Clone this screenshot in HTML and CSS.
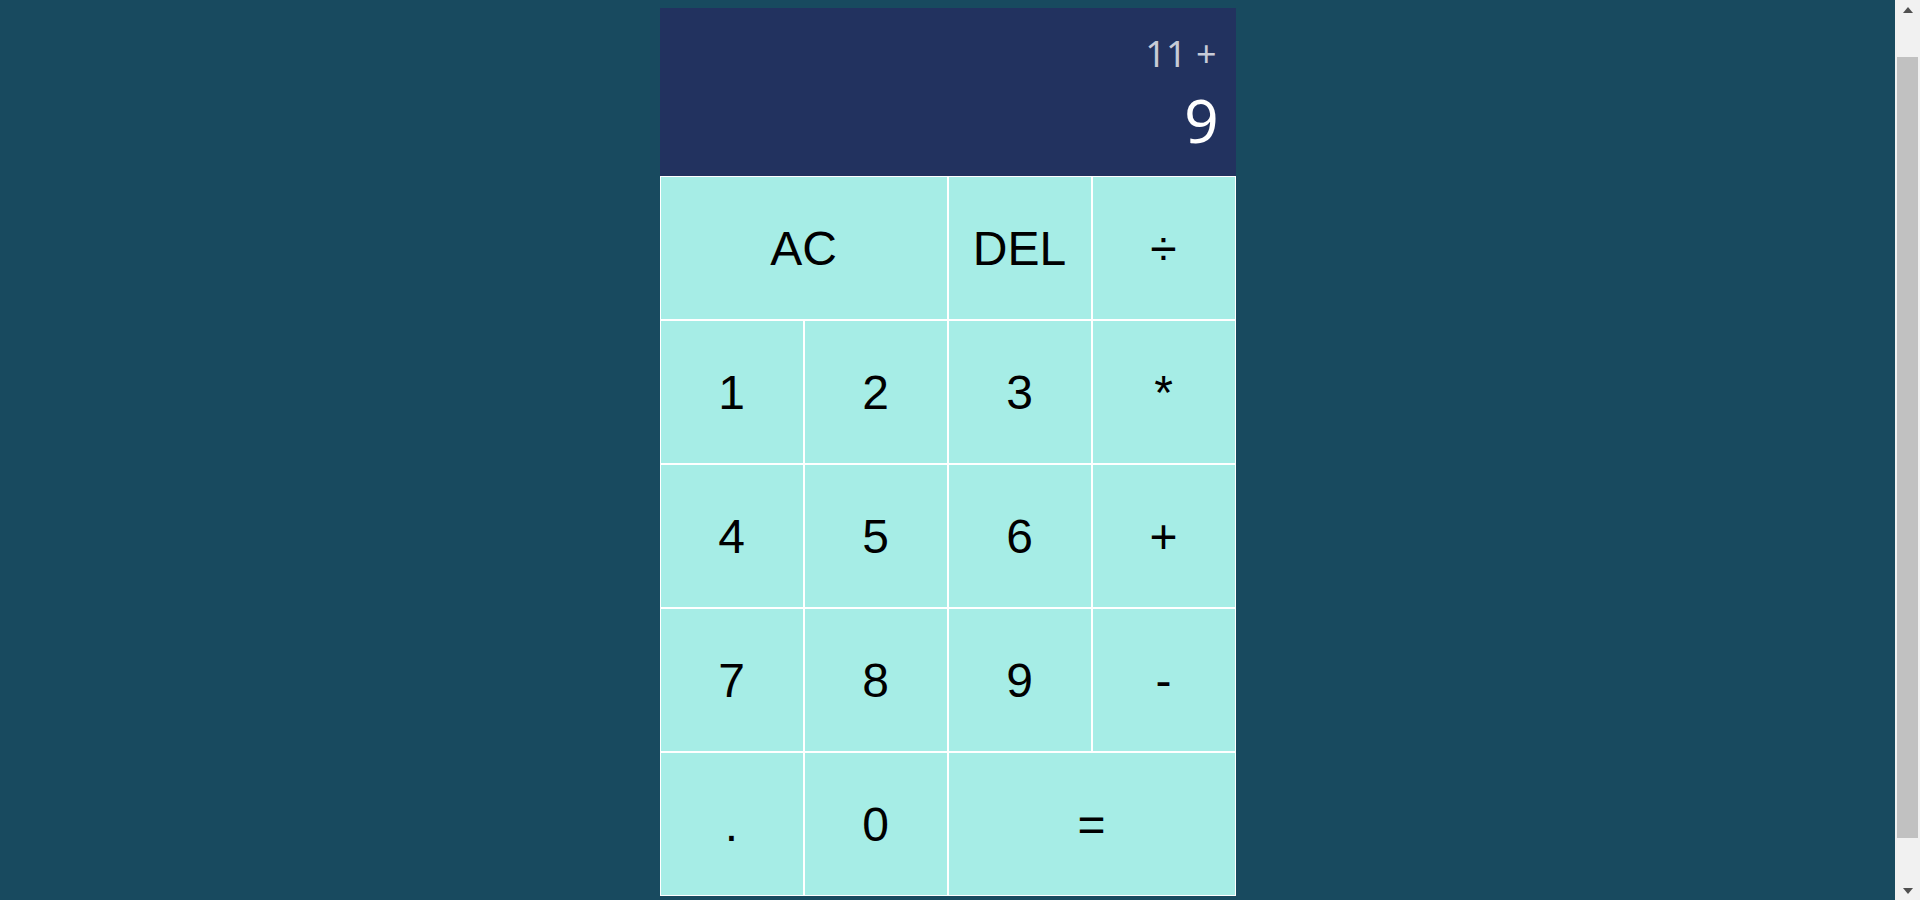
FILE: index.html
```html
<!DOCTYPE html>
<html lang="en">
<head>
<meta charset="utf-8">
<title>Calculator</title>
<link rel="stylesheet" href="styles.css">
</head>
<body>
<main class="page">
  <div class="calculator-grid">
    <div class="output">
      <div class="previous-operand">11 +</div>
      <div class="current-operand">9</div>
    </div>
    <button class="key span-two">AC</button>
    <button class="key">DEL</button>
    <button class="key">÷</button>
    <button class="key">1</button>
    <button class="key">2</button>
    <button class="key">3</button>
    <button class="key">*</button>
    <button class="key">4</button>
    <button class="key">5</button>
    <button class="key">6</button>
    <button class="key">+</button>
    <button class="key">7</button>
    <button class="key">8</button>
    <button class="key">9</button>
    <button class="key">-</button>
    <button class="key">.</button>
    <button class="key">0</button>
    <button class="key span-two">=</button>
  </div>
</main>
<div class="scrollbar" aria-hidden="true">
  <div class="sb-btn"><span class="arrow-up"></span></div>
  <div class="sb-track"><div class="sb-thumb"></div></div>
  <div class="sb-btn"><span class="arrow-down"></span></div>
</div>
</body>
</html>
```
FILE: styles.css
```css
* {
  box-sizing: border-box;
}

html, body {
  height: 100%;
  overflow: hidden;
}

body {
  margin: 0;
  display: flex;
  background-color: #184a5f;
  font-family: "Noto Sans", "Open Sans", sans-serif;
}

.page {
  flex: 1;
  min-width: 0;
  padding: 8px;
  overflow: hidden;
}

.calculator-grid {
  display: grid;
  justify-content: center;
  grid-template-columns: repeat(4, 144px);
  grid-template-rows: 168px repeat(5, 144px);
}

.key {
  cursor: pointer;
  font-family: "Liberation Sans", Arial, sans-serif;
  font-size: 48px;
  color: #000;
  padding: 0;
  margin: 0;
  border: 1px solid #fff;
  outline: none;
  background-color: #a6ede6;
}

.span-two {
  grid-column: span 2;
}

.output {
  grid-column: 1 / -1;
  background-color: #22325f;
  display: flex;
  flex-direction: column;
  align-items: flex-end;
  justify-content: flex-start;
  gap: 18px;
  padding: 28px 17px 0 10px;
}

.previous-operand {
  color: rgba(255, 255, 255, 0.75);
  font-size: 36px;
  line-height: 36px;
  margin-right: 2px;
}

.current-operand {
  color: #fff;
  font-size: 60px;
  line-height: 60px;
}

.scrollbar {
  width: 25px;
  flex: none;
  display: flex;
  flex-direction: column;
  background-color: #f1f1f1;
}

.sb-btn {
  height: 17px;
  display: flex;
  align-items: center;
  justify-content: center;
  padding-left: 1px;
}

.arrow-up {
  width: 0;
  height: 0;
  border-left: 5.5px solid transparent;
  border-right: 5.5px solid transparent;
  border-bottom: 6px solid #505050;
  margin-top: 2px;
}

.arrow-down {
  width: 0;
  height: 0;
  border-left: 5.5px solid transparent;
  border-right: 5.5px solid transparent;
  border-top: 6px solid #505050;
  margin-bottom: 2px;
}

.sb-track {
  flex: 1;
  padding: 40px 2px 0 2px;
}

.sb-thumb {
  height: 781px;
  background-color: #c1c1c1;
}
```
